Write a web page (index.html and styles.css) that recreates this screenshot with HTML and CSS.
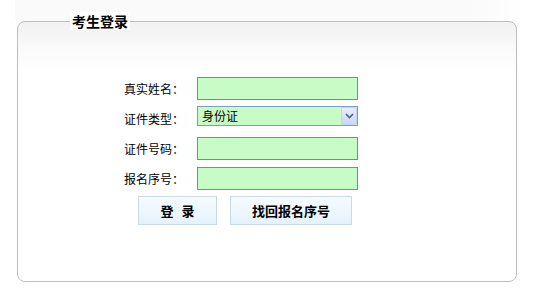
FILE: index.html
```html
<!DOCTYPE html>
<html lang="zh-CN">
<head>
<meta charset="utf-8">
<title>考生登录</title>
<link rel="stylesheet" href="styles.css">
</head>
<body>
<div class="page">
  <div class="panel">
    <div class="panel-title">考生登录</div>
    <form class="login-form">
      <div class="fields">
        <label class="field-label" for="name">真实姓名：</label>
        <input class="field-input" id="name" type="text">
        <label class="field-label" for="idtype">证件类型：</label>
        <div class="select-wrap">
          <select class="field-select" id="idtype">
            <option>身份证</option>
          </select>
          <span class="select-arrow"><svg width="9" height="6" viewBox="0 0 9 6"><path d="M1 1 L4.5 4.5 L8 1" fill="none" stroke="#4d6185" stroke-width="1.6"/></svg></span>
        </div>
        <label class="field-label" for="idno">证件号码：</label>
        <input class="field-input" id="idno" type="text">
        <label class="field-label" for="regno">报名序号：</label>
        <input class="field-input" id="regno" type="text">
      </div>
      <div class="actions">
        <button type="button" class="btn btn-login">登 录</button>
        <button type="button" class="btn btn-find">找回报名序号</button>
      </div>
    </form>
  </div>
</div>
</body>
</html>
```
FILE: styles.css
```css
html, body {
  margin: 0;
  padding: 0;
  background: #fff;
}
body {
  font-family: "Noto Sans CJK SC", "Noto Sans", sans-serif;
  font-size: 12px;
  color: #000;
}
.page {
  margin-left: 15px;
  width: 504px;
  padding: 21px 0 0 2px;
  background: linear-gradient(to right, #fafafa 90%, #fff), linear-gradient(#fff, #fff);
  background-size: 100% 21px, 100% 100%;
  background-repeat: no-repeat;
}
.panel {
  position: relative;
  width: 498px;
  height: 259px;
  border: 1px solid #bdbdbd;
  border-radius: 8px;
  background: linear-gradient(#f1f1f1 0, #fbfbfb 30px, #fff 50px);
}
.panel-title {
  position: absolute;
  top: -10px;
  left: 52px;
  padding: 0 2px;
  background: #fff;
  font-size: 14px;
  font-weight: bold;
  line-height: 18px;
  color: #000;
}
.login-form {
  padding: 55px 0 0 106px;
}
.fields {
  display: grid;
  grid-template-columns: 60px 161px;
  column-gap: 13px;
  row-gap: 7px;
  grid-auto-rows: 23px;
  align-items: center;
}
.field-label {
  text-align: right;
  white-space: nowrap;
  line-height: 16px;
}
.field-input {
  box-sizing: border-box;
  width: 161px;
  height: 23px;
  margin: 0;
  border: 1px solid #7f8c7f;
  background: #c7fcc7;
  font: inherit;
}
.select-wrap {
  position: relative;
  align-self: start;
  width: 161px;
  height: 20px;
  margin-top: -1px;
}
.field-select {
  appearance: none;
  -webkit-appearance: none;
  box-sizing: border-box;
  width: 161px;
  height: 20px;
  margin: 0;
  padding: 0 0 0 4px;
  border: 1px solid #7f9db9;
  border-radius: 0;
  background: #c7fcc7;
  font: inherit;
  font-size: 12px;
  line-height: 18px;
  color: #000;
}
.select-arrow {
  position: absolute;
  top: 1px;
  right: 1px;
  width: 16px;
  height: 18px;
  box-sizing: border-box;
  border: 1px solid #c3d3f5;
  border-radius: 2px;
  background: linear-gradient(#e6eefc, #c9d8f6);
  display: flex;
  align-items: center;
  justify-content: center;
  pointer-events: none;
}
.actions {
  display: flex;
  gap: 13px;
  margin: 6px 0 0 14px;
}
.btn {
  box-sizing: border-box;
  height: 29px;
  margin: 0;
  border: 1px solid #c9dae6;
  background: linear-gradient(#f6fbff, #e4f2fc);
  font-family: inherit;
  font-size: 13px;
  font-weight: bold;
  color: #000;
  padding: 0;
}
.btn-login {
  width: 79px;
  word-spacing: 5px;
}
.btn-find {
  width: 122px;
}
```
